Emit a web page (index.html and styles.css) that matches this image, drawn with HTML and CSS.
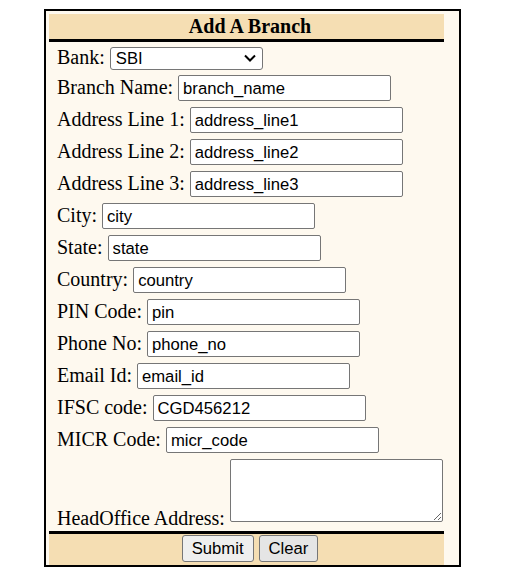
FILE: index.html
```html
<!DOCTYPE html>
<html>
<head>
<meta charset="utf-8">
<title>Add A Branch</title>
<link rel="stylesheet" href="styles.css">
</head>
<body>
<div class="box">
  <form class="panel">
    <div class="head">Add A Branch</div>
    <div class="row row-first">
      <label>Bank:</label>
      <span class="sel-wrap">
        <select class="sel"><option>SBI</option><option>HDFC</option><option>ICICI</option></select>
        <svg class="chev" width="12" height="8" viewBox="0 0 12 8"><path d="M1 1.5 L6 6.5 L11 1.5" fill="none" stroke="#000" stroke-width="2"/></svg>
      </span>
    </div>
    <div class="row"><label>Branch Name:</label><input class="txt" type="text" value="branch_name"></div>
    <div class="row"><label>Address Line 1:</label><input class="txt" type="text" value="address_line1"></div>
    <div class="row"><label>Address Line 2:</label><input class="txt" type="text" value="address_line2"></div>
    <div class="row"><label>Address Line 3:</label><input class="txt" type="text" value="address_line3"></div>
    <div class="row"><label>City:</label><input class="txt" type="text" value="city"></div>
    <div class="row"><label>State:</label><input class="txt" type="text" value="state"></div>
    <div class="row"><label>Country:</label><input class="txt" type="text" value="country"></div>
    <div class="row"><label>PIN Code:</label><input class="txt" type="text" value="pin"></div>
    <div class="row"><label>Phone No:</label><input class="txt" type="text" value="phone_no"></div>
    <div class="row"><label>Email Id:</label><input class="txt" type="text" value="email_id"></div>
    <div class="row"><label>IFSC code:</label><input class="txt" type="text" value="CGD456212"></div>
    <div class="row"><label>MICR Code:</label><input class="txt" type="text" value="micr_code"></div>
    <div class="row-area"><label class="area-label">HeadOffice Address:</label><textarea class="area"></textarea></div>
    <div class="foot">
      <button type="button" class="btn">Submit</button>
      <button type="button" class="btn btn-clear">Clear</button>
    </div>
  </form>
</div>
</body>
</html>
```
FILE: styles.css
```css
html, body {
  margin: 0;
  padding: 0;
  background: #ffffff;
}
body {
  font-family: "Liberation Serif", "Times New Roman", serif;
  font-size: 20px;
  color: #000;
}
.box {
  width: 395px;
  margin: 9px auto 0;
  border: 2px solid #000;
  background: #fef9ef;
  padding: 3px 15px 0 3px;
  box-sizing: content-box;
}
.panel {
  width: 395px;
  margin: 0;
}
.head {
  height: 25px;
  line-height: 25px;
  background: #f5deb3;
  border-bottom: 3px solid #000;
  text-align: center;
  font-weight: bold;
  padding-left: 7px;
}
.row {
  display: flex;
  align-items: baseline;
  gap: 5px;
  height: 32px;
  box-sizing: border-box;
  padding: 3px 0 0 8px;
}
.row-first {
  height: 30px;
  padding-top: 4px;
}
.txt {
  font-family: "Liberation Sans", Arial, sans-serif;
  font-size: 16.67px;
  width: 213px;
  height: 26px;
  box-sizing: border-box;
  padding: 2px 3px 0 4px;
  margin: 0;
  border: 1px solid #767676;
  border-radius: 2px;
  background: #fff;
  color: #000;
}
.sel-wrap {
  position: relative;
  display: inline-block;
}
.sel {
  font-family: "Liberation Sans", Arial, sans-serif;
  font-size: 16.67px;
  width: 153px;
  height: 23px;
  box-sizing: border-box;
  margin: 0;
  padding: 1px 0 0 5px;
  border: 1px solid #767676;
  border-radius: 3px;
  background: #fff;
  color: #000;
  -webkit-appearance: none;
  appearance: none;
}
.chev {
  position: absolute;
  right: 7px;
  top: 8px;
  pointer-events: none;
}
.row-area {
  display: flex;
  align-items: flex-end;
  gap: 5px;
  height: 75px;
  box-sizing: border-box;
  padding: 3px 0 9px 8px;
}
.area-label {
  line-height: 23px;
  margin-bottom: -8px;
}
.area {
  width: 213px;
  height: 63px;
  box-sizing: border-box;
  margin: 0;
  border: 1px solid #767676;
  border-radius: 2px;
  background: #fff;
}
.foot {
  height: 30px;
  background: #f5deb3;
  border-top: 3px solid #000;
  display: flex;
  justify-content: center;
  align-items: flex-start;
  gap: 5px;
  padding: 1px 0 0 7px;
  box-sizing: content-box;
}
.btn {
  font-family: "Liberation Sans", Arial, sans-serif;
  font-size: 16.67px;
  height: 27px;
  padding: 0 9px;
  margin: 0;
  border: 1px solid #767676;
  border-radius: 3px;
  background: #efefef;
  color: #000;
}
.btn-clear {
  background: #e5e5e5;
}
```
